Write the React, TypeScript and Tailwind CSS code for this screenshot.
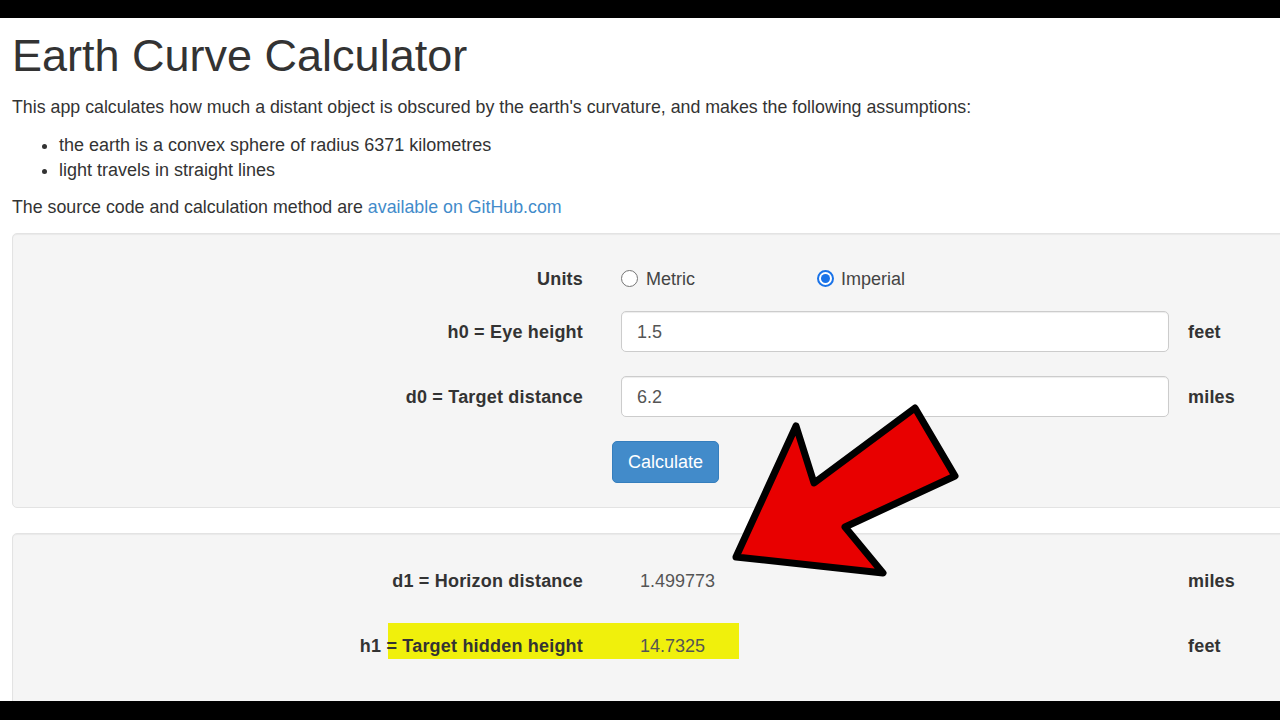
import React from "react";

function Radio({ checked }: { checked?: boolean }) {
  if (checked) {
    return (
      <span className="w-[17px] h-[17px] rounded-full border-2 border-[#1a73e8] bg-white flex items-center justify-center">
        <span className="w-[9px] h-[9px] rounded-full bg-[#1a73e8]" />
      </span>
    );
  }
  return <span className="w-[17px] h-[17px] rounded-full border border-[#767676] bg-white" />;
}

function FormRow({ label, children, unit, className }: { label: string; children: React.ReactNode; unit?: string; className?: string }) {
  return (
    <div className={"flex items-center " + (className ?? "")}>
      <div className="w-[570px] text-right font-bold tracking-[0.2px] text-[#333]">{label}</div>
      <div className="w-[548px] ml-[38px] flex items-center">{children}</div>
      {unit && <div className="ml-[19px] font-bold tracking-[0.2px] text-[#333]">{unit}</div>}
    </div>
  );
}

export default function App() {
  return (
    <div
      className="w-[1280px] h-[720px] overflow-hidden flex flex-col bg-white relative text-[18px] leading-[24px] text-[#333]"
      style={{ fontFamily: '"Liberation Sans", Arial, Helvetica, sans-serif' }}
    >
      <div className="h-[18px] bg-black shrink-0" />

      <div className="flex-1 overflow-hidden pl-[12px]">
        <h1 className="mt-[14px] text-[45px] leading-[48px] font-normal text-[#333]">Earth Curve Calculator</h1>
        <p className="mt-[15px] text-[17.8px]">
          This app calculates how much a distant object is obscured by the earth's curvature, and makes the following assumptions:
        </p>
        <ul className="mt-[14px] pl-[47px] list-disc">
          <li>the earth is a convex sphere of radius 6371 kilometres</li>
          <li className="mt-[1px]">light travels in straight lines</li>
        </ul>
        <p className="mt-[13px] text-[17.8px]">
          The source code and calculation method are{" "}
          <a className="text-[#428bca]">available on GitHub.com</a>
        </p>

        {/* input panel */}
        <div className="mt-[14px] w-[1300px] bg-[#f5f5f5] border border-[#e3e3e3] rounded-[5px] shadow-[inset_0_1px_1px_rgba(0,0,0,0.05)] pt-[24px] pb-[24px]">
          <FormRow label="Units" className="h-[41px]">
            <label className="flex items-center gap-[8px] w-[196px]">
              <Radio />
              <span className="text-[#444]">Metric</span>
            </label>
            <label className="flex items-center gap-[7px]">
              <Radio checked />
              <span className="text-[#444]">Imperial</span>
            </label>
          </FormRow>
          <FormRow label="h0 = Eye height" unit="feet" className="mt-[12px] h-[41px]">
            <div className="w-full h-[41px] bg-white border border-[#ccc] rounded-[5px] shadow-[inset_0_1px_1px_rgba(0,0,0,0.075)] pl-[15px] flex items-center text-[#555]">
              1.5
            </div>
          </FormRow>
          <FormRow label="d0 = Target distance" unit="miles" className="mt-[24px] h-[41px]">
            <div className="w-full h-[41px] bg-white border border-[#ccc] rounded-[5px] shadow-[inset_0_1px_1px_rgba(0,0,0,0.075)] pl-[15px] flex items-center text-[#555]">
              6.2
            </div>
          </FormRow>
          <div className="mt-[24px] pl-[599px]">
            <button className="h-[42px] w-[107px] bg-[#428bca] border border-[#357ebd] rounded-[5px] text-white">
              Calculate
            </button>
          </div>
        </div>

        {/* results panel */}
        <div className="mt-[25px] w-[1300px] h-[300px] bg-[#f5f5f5] border border-[#e3e3e3] rounded-[5px] shadow-[inset_0_1px_1px_rgba(0,0,0,0.05)] pt-[34px] relative">
          <div className="absolute left-[375px] top-[89px] w-[351px] h-[36px] bg-[#f0f00c]" />
          <div className="relative">
            <FormRow label="d1 = Horizon distance" unit="miles" className="h-[26px]">
              <span className="pl-[19px] text-[#555]">1.499773</span>
            </FormRow>
            <FormRow label="h1 = Target hidden height" unit="feet" className="mt-[39px] h-[26px]">
              <span className="pl-[19px] text-[#555]">14.7325</span>
            </FormRow>
          </div>
        </div>
      </div>

      <div className="h-[19px] bg-black shrink-0" />

      {/* annotation arrow */}
      <svg className="absolute left-0 top-0 pointer-events-none" width="1280" height="720" viewBox="0 0 1280 720">
        <polygon
          points="736,557 796,426 814,483 915,408 955,476 845,527 883,573"
          fill="#e80000"
          stroke="#000"
          strokeWidth="7"
          strokeLinejoin="round"
        />
      </svg>
    </div>
  );
}
